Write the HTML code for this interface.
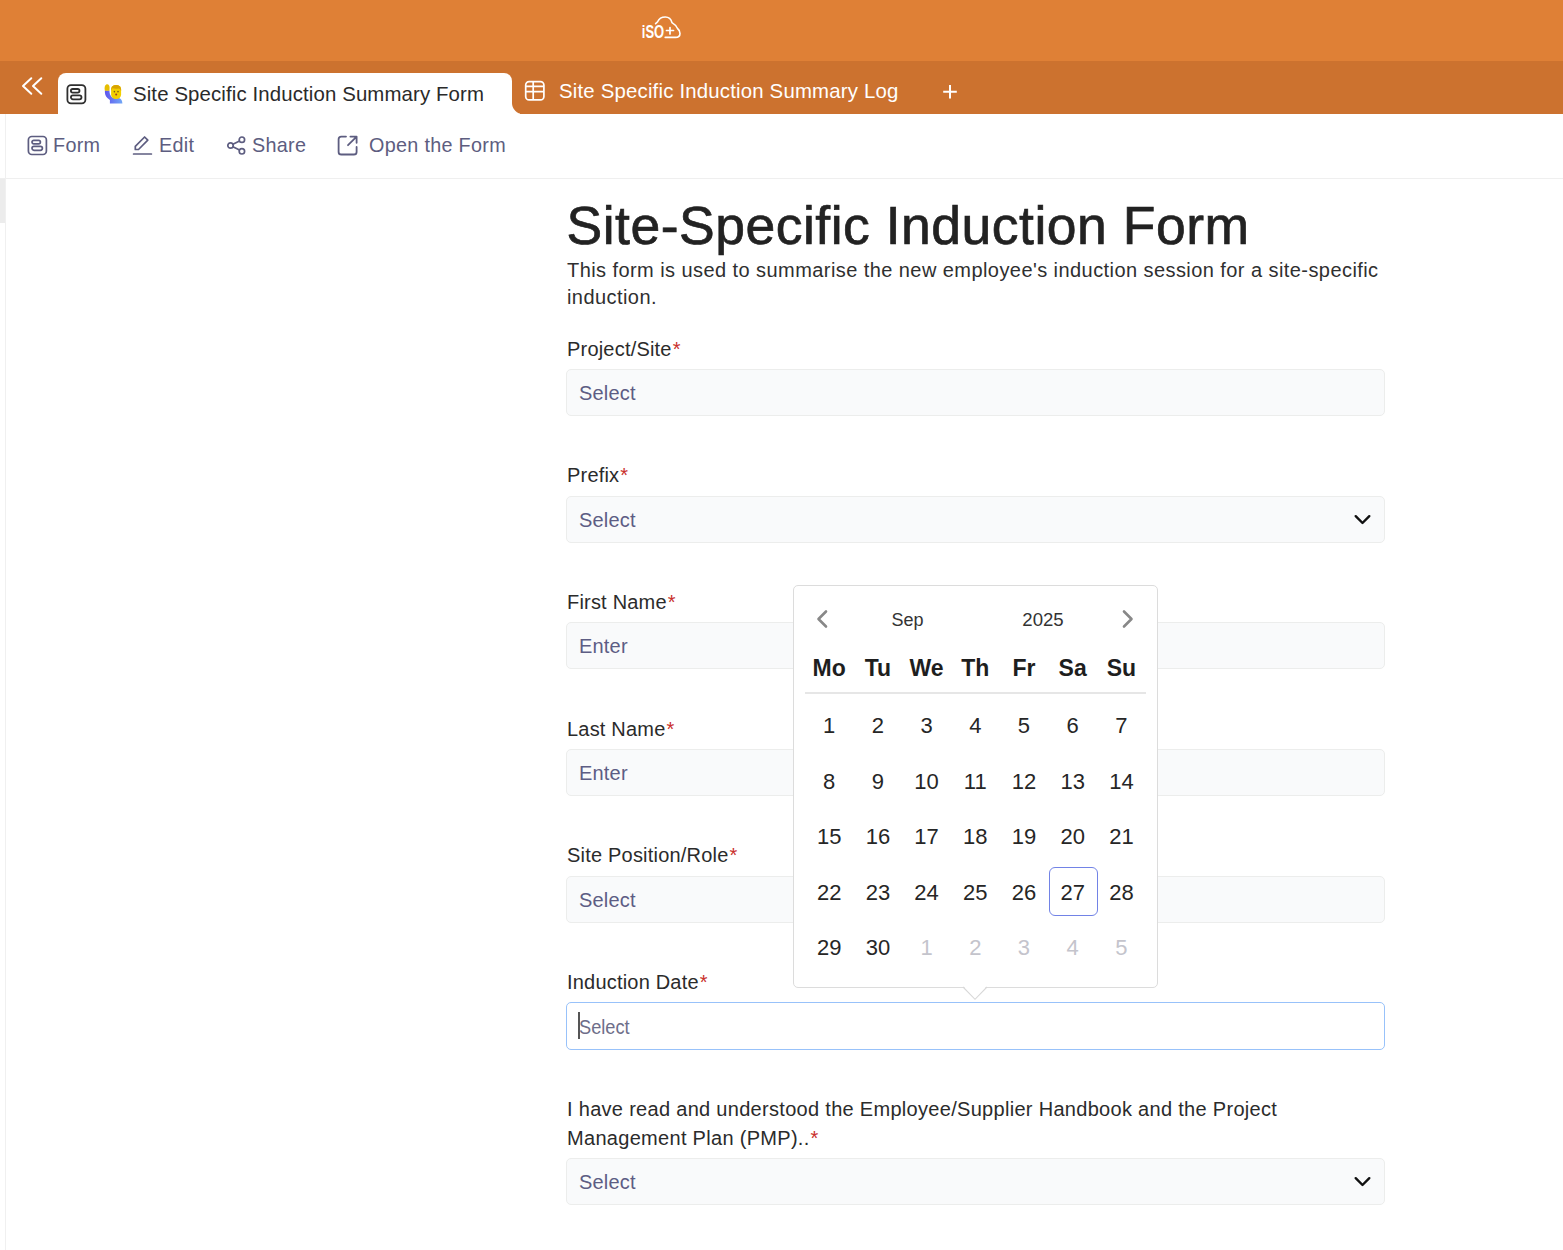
<!DOCTYPE html>
<html><head><meta charset="utf-8">
<style>
*{box-sizing:border-box;margin:0;padding:0}
html,body{width:1563px;height:1250px;overflow:hidden;background:#fff;font-family:"Liberation Sans",sans-serif;position:relative}
.abs{position:absolute}
#hdr{left:0;top:0;width:1563px;height:61px;background:#DF8036}
#tabbar{left:0;top:61px;width:1563px;height:53px;background:#CC722F}
#tab1{left:58px;top:73px;width:454px;height:41px;background:#fff;border-radius:8px 8px 0 0}
#tab2{left:512px;top:61px;width:1051px;height:53px;background:#CC722F;border-radius:0 0 0 11px}
#tab2bg{left:500px;top:100px;width:20px;height:14px;background:#fff}
.t1txt{font-size:20.4px;color:#2a2a2a;letter-spacing:0.12px;white-space:nowrap}
.t2txt{font-size:20.4px;color:#fff;letter-spacing:0.18px;white-space:nowrap}
#toolbar{left:0;top:114px;width:1563px;height:65px;border-bottom:1px solid #efefef}
.tb{font-size:19.8px;letter-spacing:0.3px;color:#5D5D80;white-space:nowrap}
#vline{left:5px;top:114px;width:1px;height:1136px;background:#f0f0f0}
#gblock{left:0;top:179px;width:5px;height:44px;background:#ececec}
.title{font-size:53.5px;color:#222;-webkit-text-stroke:0.7px #222;letter-spacing:0.5px;white-space:nowrap}
.desc{font-size:20px;color:#2f2f2f;letter-spacing:0.43px;line-height:27px}
.lbl{font-size:20px;color:#2b2b2b;letter-spacing:0.2px;white-space:nowrap}
.req{color:#c9302c;margin-left:1px}
.inp{left:566px;width:819px;height:47px;background:#F9FAFB;border:1px solid #ECEDEC;border-radius:5px}
.ph{font-size:20px;color:#5d5d84;letter-spacing:0.2px;white-space:nowrap}
.lbl2{font-size:20px;color:#2b2b2b;letter-spacing:0.3px;line-height:28.6px}
.inpf{left:566px;width:819px;height:47.5px;background:#fff;border:1.3px solid #98C2FA;border-radius:5px}
.caret{width:1.5px;height:27px;background:#555}
.phf{font-size:20px;color:#6e6e8a;white-space:nowrap;line-height:20px;transform:scaleX(0.91);transform-origin:0 0}
.chev{left:1353px}
.lbl,.ph{line-height:20px}
.calh{font-size:18px;color:#333;text-align:center;line-height:20px;white-space:nowrap}
.wd{width:48.7px;text-align:center;font-size:23px;font-weight:bold;color:#1e1e1e;line-height:26px}
.dn{width:48.7px;text-align:center;font-size:22px;color:#262626;line-height:24px}
.dg{color:#c4c4cc}
</style></head><body>
<div id="hdr" class="abs"></div>
<div id="tabbar" class="abs"></div>
<div id="tab2bg" class="abs"></div>
<div id="tab1" class="abs"></div>
<div id="tab2" class="abs"></div>
<div id="toolbar" class="abs"></div>
<div id="vline" class="abs"></div>
<div id="gblock" class="abs"></div>

<!-- header logo -->
<svg class="abs" style="left:630px;top:10px" width="60" height="40" viewBox="0 0 60 40">
<g fill="none" stroke="#fff" stroke-width="1.6" stroke-linecap="round">
<path d="M25.6 13.6 L27.6 11.8 C29 8.5 31.5 7 35.3 7 C39 7 41.2 9.5 42 12.6 C44.5 14 46.2 16 47.5 18.5 C49.5 20 50 22 50 23.5 C50 26 48.3 27.4 45.5 27.4 L35.2 27.4"/>
<path d="M40 17.5 V24 M36.5 20.5 H43.5" stroke-width="1.7"/>
</g>
<text x="11.8" y="27.6" font-family="Liberation Sans" font-weight="bold" font-size="18.6" fill="#fff" textLength="22.4" lengthAdjust="spacingAndGlyphs">iSO</text>
</svg>

<!-- tab bar content -->
<svg class="abs" style="left:20px;top:75px" width="24" height="22" viewBox="0 0 24 22"><path d="M11.3 3.3 L3 11 L11.3 18.7 M21.3 3.3 L13 11 L21.3 18.7" fill="none" stroke="#fff" stroke-width="2" stroke-linecap="round" stroke-linejoin="round"/></svg>
<svg class="abs" style="left:66px;top:84px" width="21" height="21" viewBox="0 0 21 21"><g fill="none" stroke="#2f2f2f" stroke-width="1.8"><rect x="1.4" y="1.1" width="18" height="18.2" rx="3.6"/><rect x="4.9" y="5" width="8.6" height="3.6" rx="1.8"/><rect x="4.9" y="11.3" width="10.6" height="4" rx="2"/></g></svg>
<svg class="abs" style="left:103px;top:83px" width="22" height="22" viewBox="0 0 22 22">
<defs><linearGradient id="eg" x1="0" y1="0" x2="1" y2="0"><stop offset="0" stop-color="#5F55EE"/><stop offset="1" stop-color="#72A8F6"/></linearGradient></defs>
<path d="M1.9 7.6 C1.7 11 2.4 13.3 4.4 15 L6.9 17 L6.9 20.6 L19.4 20.6 C19.4 17.2 17.6 14.9 14.6 14.7 L9.6 14.7 C8.1 13.5 6.9 12 6.6 9.5 L6.4 7.6 Z" fill="url(#eg)"/>
<path d="M1.9 7.8 C1.3 5 1.5 2.1 3.6 1.2 C5.6 0.8 6.9 2.6 6.6 5.1 L6.4 7.8 Z" fill="#E6BE00"/>
<rect x="8.1" y="2" width="10" height="14" rx="4.6" fill="#F2CF00"/>
<path d="M8.1 6.6 C8.1 3.6 10 2 13.1 2 C16.2 2 18.1 3.6 18.1 6.6 L18.1 8 C17.6 6.6 16.8 5.6 15.8 5.4 C13.8 5.9 11.5 5.9 9.6 5.3 C8.8 5.9 8.4 7 8.1 8 Z" fill="#D9A400"/>
<ellipse cx="11.4" cy="8.6" rx="0.8" ry="0.9" fill="#7a5a1a"/><ellipse cx="15" cy="8.6" rx="0.8" ry="0.9" fill="#7a5a1a"/>
<ellipse cx="13.2" cy="11.6" rx="1" ry="1" fill="#A03A28"/>
</svg>
<svg class="abs" style="left:524px;top:80px" width="22" height="22" viewBox="0 0 22 22"><g fill="none" stroke="#fff" stroke-width="1.7"><rect x="1.7" y="1.6" width="18.2" height="18.3" rx="3.4"/><path d="M1.7 6.3 H19.9 M1.7 11.6 H19.9 M9.2 1.6 V19.9"/></g></svg>
<svg class="abs" style="left:940px;top:82px" width="20" height="20" viewBox="0 0 20 20"><path d="M10 3 V16.5 M3.2 9.8 H16.8" fill="none" stroke="#fff" stroke-width="2"/></svg>

<div class="abs t1txt" style="left:133px;top:83px">Site Specific Induction Summary Form</div>
<div class="abs t2txt" style="left:559px;top:80px">Site Specific Induction Summary Log</div>

<!-- toolbar -->
<svg class="abs" style="left:27px;top:135px" width="21" height="21" viewBox="0 0 21 21"><g fill="none" stroke="#5D5D80" stroke-width="1.7"><rect x="1.4" y="1.5" width="18" height="18" rx="3.4"/><rect x="5" y="5.3" width="8.4" height="3.5" rx="1.75"/><rect x="5" y="11.4" width="10.4" height="3.9" rx="1.95"/></g></svg>
<svg class="abs" style="left:132px;top:135px" width="22" height="21" viewBox="0 0 22 21"><g fill="none" stroke="#5D5D80" stroke-width="1.7" stroke-linejoin="round" stroke-linecap="round"><path d="M3.3 14.5 L3.3 11.3 L12.6 2 L15.8 5.2 L6.5 14.5 Z"/><path d="M1.6 19 H19.4"/></g></svg>
<svg class="abs" style="left:226px;top:135px" width="21" height="21" viewBox="0 0 21 21"><g fill="none" stroke="#5D5D80" stroke-width="1.7"><circle cx="15.9" cy="4.7" r="2.7"/><circle cx="4.5" cy="10.5" r="2.7"/><circle cx="15.9" cy="16.3" r="2.7"/><path d="M6.9 9.3 L13.5 5.9 M6.9 11.7 L13.5 15.1"/></g></svg>
<svg class="abs" style="left:337px;top:135px" width="22" height="21" viewBox="0 0 22 21"><g fill="none" stroke="#5D5D80" stroke-width="1.8" stroke-linecap="round" stroke-linejoin="round"><path d="M9 1.6 H4.3 C2.6 1.6 1.6 2.6 1.6 4.3 V16.9 C1.6 18.6 2.6 19.5 4.3 19.5 H16.9 C18.6 19.5 19.6 18.6 19.6 16.9 V12"/><path d="M13.4 1.6 H19.6 V7.8 M19.4 1.8 L11 10.2"/></g></svg>
<div class="abs tb" style="left:53px;top:134px">Form</div>
<div class="abs tb" style="left:159px;top:134px">Edit</div>
<div class="abs tb" style="left:252px;top:134px">Share</div>
<div class="abs tb" style="left:369px;top:134px">Open the Form</div>

<!-- form -->
<div class="abs title" style="left:566.5px;top:195px">Site-Specific Induction Form</div>
<div class="abs desc" style="left:567px;top:256.5px;width:830px">This form is used to summarise the new employee's induction session for a site-specific induction.</div>

<div class="abs lbl" style="left:567px;top:338.6px">Project/Site<span class="req">*</span></div>
<div class="abs inp" style="top:369px"></div>
<div class="abs ph" style="left:579px;top:383.1px">Select</div>
<div class="abs lbl" style="left:567px;top:465.1px">Prefix<span class="req">*</span></div>
<div class="abs inp" style="top:495.5px"></div>
<div class="abs ph" style="left:579px;top:509.6px">Select</div>
<svg class="abs chev" style="top:512.5px" width="20" height="14" viewBox="0 0 20 14"><path d="M2.7 3.2 L9.5 10 L16.3 3.2" fill="none" stroke="#111" stroke-width="2.4" stroke-linecap="round" stroke-linejoin="round"/></svg>
<div class="abs lbl" style="left:567px;top:591.6px">First Name<span class="req">*</span></div>
<div class="abs inp" style="top:622px"></div>
<div class="abs ph" style="left:579px;top:636.1px">Enter</div>
<div class="abs lbl" style="left:567px;top:718.6px">Last Name<span class="req">*</span></div>
<div class="abs inp" style="top:749px"></div>
<div class="abs ph" style="left:579px;top:763.1px">Enter</div>
<div class="abs lbl" style="left:567px;top:845.1px">Site Position/Role<span class="req">*</span></div>
<div class="abs inp" style="top:875.5px"></div>
<div class="abs ph" style="left:579px;top:889.6px">Select</div>
<div class="abs lbl" style="left:567px;top:971.6px">Induction Date<span class="req">*</span></div>
<div class="abs inpf" style="top:1002px"></div>
<div class="abs caret" style="left:578px;top:1012px"></div>
<div class="abs phf" style="left:578.5px;top:1016.5px">Select</div>
<div class="abs lbl2" style="left:567px;top:1095px;width:830px">I have read and understood the Employee/Supplier Handbook and the Project Management Plan (PMP)..<span class="req">*</span></div>
<div class="abs inp" style="top:1158px"></div>
<div class="abs ph" style="left:579px;top:1172.1px">Select</div>
<svg class="abs chev" style="top:1175.0px" width="20" height="14" viewBox="0 0 20 14"><path d="M2.7 3.2 L9.5 10 L16.3 3.2" fill="none" stroke="#111" stroke-width="2.4" stroke-linecap="round" stroke-linejoin="round"/></svg>
<div class="abs" id="cal" style="left:793px;top:585px;width:365px;height:403px;border:1px solid #dcdcdc;border-radius:5px;background:#fff"></div>
<svg class="abs" style="left:960px;top:984px" width="30" height="20" viewBox="0 0 30 20"><path d="M3.2 2 L15 14.4 L26.8 2 Z" fill="#fff"/><path d="M3 3 L15 15.3 L27 3" fill="none" stroke="#d8d8d8" stroke-width="1.1"/></svg>
<svg class="abs" style="left:814px;top:608px" width="16" height="22" viewBox="0 0 16 22"><path d="M12 3.5 L4.5 11 L12 18.5" fill="none" stroke="#888" stroke-width="2.6" stroke-linecap="round" stroke-linejoin="round"/></svg>
<svg class="abs" style="left:1120px;top:608px" width="16" height="22" viewBox="0 0 16 22"><path d="M4 3.5 L11.5 11 L4 18.5" fill="none" stroke="#888" stroke-width="2.6" stroke-linecap="round" stroke-linejoin="round"/></svg>
<div class="abs calh" style="left:880px;top:610px;width:55px">Sep</div>
<div class="abs calh" style="left:1015px;top:609.5px;width:56px;font-size:18.6px">2025</div>
<div class="abs wd" style="left:804.85px;top:655px">Mo</div>
<div class="abs wd" style="left:853.55px;top:655px">Tu</div>
<div class="abs wd" style="left:902.25px;top:655px">We</div>
<div class="abs wd" style="left:950.95px;top:655px">Th</div>
<div class="abs wd" style="left:999.65px;top:655px">Fr</div>
<div class="abs wd" style="left:1048.35px;top:655px">Sa</div>
<div class="abs wd" style="left:1097.05px;top:655px">Su</div>
<div class="abs" style="left:805px;top:692px;width:341px;height:2px;background:#e6e6e6"></div>
<div class="abs dn" style="left:804.85px;top:714.2px">1</div>
<div class="abs dn" style="left:853.55px;top:714.2px">2</div>
<div class="abs dn" style="left:902.25px;top:714.2px">3</div>
<div class="abs dn" style="left:950.95px;top:714.2px">4</div>
<div class="abs dn" style="left:999.65px;top:714.2px">5</div>
<div class="abs dn" style="left:1048.35px;top:714.2px">6</div>
<div class="abs dn" style="left:1097.05px;top:714.2px">7</div>
<div class="abs dn" style="left:804.85px;top:769.7px">8</div>
<div class="abs dn" style="left:853.55px;top:769.7px">9</div>
<div class="abs dn" style="left:902.25px;top:769.7px">10</div>
<div class="abs dn" style="left:950.95px;top:769.7px">11</div>
<div class="abs dn" style="left:999.65px;top:769.7px">12</div>
<div class="abs dn" style="left:1048.35px;top:769.7px">13</div>
<div class="abs dn" style="left:1097.05px;top:769.7px">14</div>
<div class="abs dn" style="left:804.85px;top:825.2px">15</div>
<div class="abs dn" style="left:853.55px;top:825.2px">16</div>
<div class="abs dn" style="left:902.25px;top:825.2px">17</div>
<div class="abs dn" style="left:950.95px;top:825.2px">18</div>
<div class="abs dn" style="left:999.65px;top:825.2px">19</div>
<div class="abs dn" style="left:1048.35px;top:825.2px">20</div>
<div class="abs dn" style="left:1097.05px;top:825.2px">21</div>
<div class="abs dn" style="left:804.85px;top:880.7px">22</div>
<div class="abs dn" style="left:853.55px;top:880.7px">23</div>
<div class="abs dn" style="left:902.25px;top:880.7px">24</div>
<div class="abs dn" style="left:950.95px;top:880.7px">25</div>
<div class="abs dn" style="left:999.65px;top:880.7px">26</div>
<div class="abs dn" style="left:1048.35px;top:880.7px">27</div>
<div class="abs dn" style="left:1097.05px;top:880.7px">28</div>
<div class="abs dn" style="left:804.85px;top:936.2px">29</div>
<div class="abs dn" style="left:853.55px;top:936.2px">30</div>
<div class="abs dn dg" style="left:902.25px;top:936.2px">1</div>
<div class="abs dn dg" style="left:950.95px;top:936.2px">2</div>
<div class="abs dn dg" style="left:999.65px;top:936.2px">3</div>
<div class="abs dn dg" style="left:1048.35px;top:936.2px">4</div>
<div class="abs dn dg" style="left:1097.05px;top:936.2px">5</div>
<div class="abs" style="left:1049px;top:867.3px;width:48.5px;height:48.7px;border:1.5px solid #7283e6;border-radius:6px"></div>
</body></html>
